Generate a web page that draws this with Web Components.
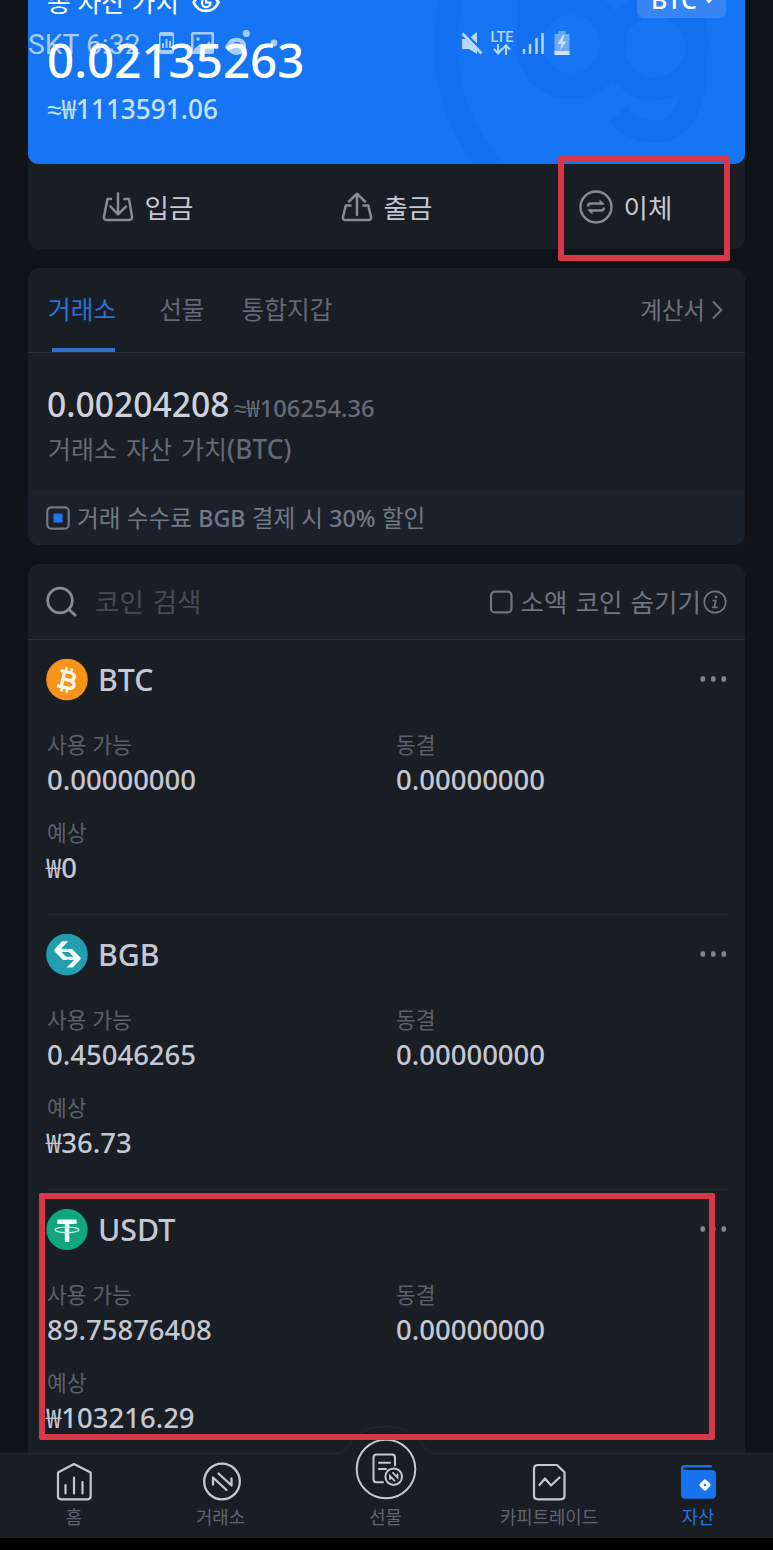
<!DOCTYPE html>
<html lang="ko">
<head>
<meta charset="utf-8">
<title>자산</title>
<style>
body {
    margin: 0;
    background: #000;
    font-family: "Noto Sans", "Noto Sans CJK KR", sans-serif;
}
</style>
</head>
<body>
<wallet-app></wallet-app>

<script>
/** Markup of every icon, with its box size. */
const icons = {
    eye: [28, 20, `<g fill="none" stroke="currentColor" stroke-width="2.8"><path d="M1.6 9.500C7-1.500 21-1.500 26.400 9.500 21 20.800 7 20.800 1.600 9.500Z"/><path d="M14 5.500V9.500H18.500A4.300 4.300 0 1 1 11 7" stroke-width="2.200"/></g>`],
    caret: [10, 6, `<path d="M0 0H10L5 5.500Z" fill="currentColor"/>`],
    deposit: [32, 30, `<g fill="none" stroke="currentColor" stroke-width="2.500" stroke-linecap="round" stroke-linejoin="round"><path d="M9 7H5.500L2 24.500Q1.600 28 4.500 28H27.500Q30.400 28 30 24.500L27 7H22.500M16 1.500V22M8.500 14.500 16 22.300 24 14.500"/></g>`],
    withdraw: [32, 30, `<g fill="none" stroke="currentColor" stroke-width="2.500" stroke-linecap="round" stroke-linejoin="round"><path d="M9.500 13.500H4.800L2 25Q1.600 28 4.500 28H27.500Q30.400 28 30 25L27.300 13.500H22.500M16 23V2M8 9.500 16 1.700 24 9.500"/></g>`],
    transfer: [34, 34, `<g fill="none" stroke="currentColor" stroke-width="2.400"><circle cx="17" cy="17" r="15.500"/><path d="M9 16.500Q9 13.500 12 13.500H24M25 17.500Q25 20.500 22 20.500H10"/></g><path d="M20.500 9.500 26 14.600H20.500ZM13.500 24.500 8 19.500H13.500Z" fill="currentColor"/>`],
    chevron: [12, 20, `<path d="M2 1.500 10.300 10 2 18.500" fill="none" stroke="currentColor" stroke-width="2"/>`],
    search: [32, 32, `<g fill="none" stroke="currentColor" stroke-width="2.800"><circle cx="14" cy="14.500" r="12.300"/><path d="M22.500 23 30 30"/></g>`],
    checked: [24, 24, `<rect x="1.300" y="1.300" width="21.400" height="21.400" rx="4" fill="none" stroke="currentColor" stroke-width="2.200"/><path d="M7.500 7.500H16.500V16.500H7.500Z" fill="#1b76ef"/>`],
    unchecked: [24, 24, `<rect x="2" y="1.600" width="20.500" height="20.800" rx="4" fill="none" stroke="currentColor" stroke-width="2.200"/>`],
    info: [24, 24, `<g fill="none" stroke="currentColor" stroke-width="1.700"><circle cx="12" cy="12" r="10.700"/><path d="M9.500 10.500H12.700L11.300 17.300M9 17.300H14.500"/></g><circle cx="13" cy="7" r="1.400" fill="currentColor"/>`],
    more: [28, 6, `<g fill="currentColor"><rect x="1.500" y=".3" width="4.600" height="5.400" rx="1.600"/><rect x="12" y=".3" width="4.600" height="5.400" rx="1.600"/><rect x="22.500" y=".3" width="4.600" height="5.400" rx="1.600"/></g>`],
    btc: [42, 42, `<circle cx="21" cy="20.500" r="20.800" fill="#f7931a"/><g transform="rotate(13 21 21)" fill="none" stroke="#fff6e8" stroke-width="3.300"><path d="M12.500 13.200H22.500Q27.500 13.200 27.500 17Q27.500 20.700 22.500 20.700H17M22.500 20.700Q29 20.700 29 24.700Q29 28.800 22.500 28.800H12.500M16.800 13V29"/><path d="M18 8.500V13M23.300 8.500V13M18 29V33.500M23.300 29V33.500" stroke-width="2.700"/></g>`],
    bgb: [42, 42, `<circle cx="21" cy="20.500" r="20.800" fill="#249eae"/><g fill="#f2ffff"><path id="half" d="M16.200 7.300H22.200L15 14.800H20L23.200 18.100H15.500L21.500 24.100V25.900H17L8.600 17.400Q7.800 16.300 8.600 15.300Z"/><use href="#half" transform="rotate(180 21.500 20.400)"/></g>`],
    usdt: [42, 42, `<circle cx="21" cy="20.500" r="20.600" fill="#12a67c"/><path d="M11.300 10.500H30.600V15H23.300V33H18.800V15H11.300Z" fill="#f0fff9"/><ellipse cx="21" cy="20.800" rx="12" ry="2.800" fill="none" stroke="#c6f1e2" stroke-width="1.200"/>`],
    home: [40, 42, `<g fill="none" stroke="currentColor" stroke-width="2.200" stroke-linecap="round" stroke-linejoin="round"><path d="M4 12.500 20 4 36.700 12.500V36Q36.700 39.300 33.500 39.300H7.200Q4 39.300 4 36Z"/><path d="M11.500 25V33.500M20 17.500V33.500M28.500 22V33.500"/></g>`],
    exchange: [40, 42, `<g fill="none" stroke="currentColor" stroke-width="2.300" stroke-linejoin="round" stroke-linecap="round"><circle cx="21" cy="21.500" r="17.800"/><path d="M17.500 13.500 30.500 25.500V18.500M25.500 30 12 17.500V24.500"/></g>`],
    futures: [62, 62, `<circle cx="31" cy="31" r="29.300" fill="none" stroke="currentColor" stroke-width="2"/><g fill="none" stroke="currentColor" stroke-width="2" stroke-linecap="round"><path d="M28 44.300H21.200Q18.500 44.300 18.500 41.300V19.500Q18.500 16.500 21.500 16.500H37Q40 16.500 40 19.500V27.500M24 24.700H35M24 31H31"/><circle cx="38.700" cy="38.700" r="8.300"/><path d="M38 34.800 42.500 39.500V36.500M39.500 42.600 35 38V41" stroke-width="1.800"/></g>`],
    copy: [40, 42, `<g fill="none" stroke="currentColor" stroke-width="2.200" stroke-linejoin="round" stroke-linecap="round"><path d="M9 5H28L35.500 12.300V35.500Q35.500 39.300 31.700 39.300H9Q5 39.300 5 35.500V9Q5 5 9 5Z"/><path d="M10.500 25 16 18.500 22 25.500 30.500 17.500"/></g>`],
    wallet: [40, 42, `<path d="M6 5H33Q34 5 34 6.200T33 7.400H6.500Q5.500 7.400 5.500 8.700T6.500 10H34Q38 10 38 14V34Q38 38.700 34 38.700H7Q3 38.700 3 34V8.500Q3 5 6 5Z" fill="#1672ee"/><path d="M27 21 31 25 27 29 23 25Z" fill="#1672ee" stroke="#fff" stroke-width="3.200" stroke-linejoin="round"/>`],
}

/** Draws an icon at its own size, in the colour of the text around it. */
customElements.define('app-icon',
class extends HTMLElement {
    constructor() {
        super()
        this.attachShadow({ mode: 'open' })
    }

    connectedCallback() {
        const [width, height, body] = icons[this.getAttribute('name')]
        this.shadowRoot.innerHTML = `
        <style>
        :host { display: block; flex: none; }
        svg { display: block; }
        </style>
        <svg width="${width}" height="${height}" viewBox="0 0 ${width} ${height}">${body}</svg>`
    }
})

/**
 * Defines an element whose shadow root is cloned from a template.
 * @param {string} name Tag name.
 * @param {string} html Styles and markup.
 */
function defineStatic(name, html) {
    const template = document.createElement('template')
    template.innerHTML = html
    customElements.define(name,
    class extends HTMLElement {
        constructor() {
            super()
            this.attachShadow({ mode: 'open' })
            .appendChild(template.content.cloneNode(true))
        }
    })
}

defineStatic('status-bar', `
<style>
:host {
    position: absolute;
    top: 30px;
    left: 0;
    width: 717px;
    height: 28px;
    color: #a9cdfb;
    font-family: Roboto, sans-serif;
}
.bar { display: flex; height: 28px; align-items: center; }
.carrier { font-size: 28.300px; line-height: 28px; width: 130px; margin-top: 2px; white-space: nowrap; }
.left { width: 303px; }
.lte { width: 24px; margin: -1px 0 0 7px; text-align: center; font-size: 14.500px; line-height: 12px; font-weight: 500; color: #b8d6fc; }
.lte svg { margin: 0 auto; }
svg { display: block; flex: none; }
</style>
<div class="bar">
    <span class="carrier">SKT 6:32</span>
    <svg class="left" height="28" viewBox="0 0 303 28">
        <g fill="currentColor">
            <path fill-rule="evenodd" d="M3 2H14Q16 2 16 4V22Q16 24 14 24H3Q1 24 1 22V4Q1 2 3 2ZM2.500 6V20H14.500V6Z"/>
            <path d="M4 13H6V18H4ZM7.500 9H9.500V18H7.500ZM11 11H13V18H11Z"/>
            <path fill-rule="evenodd" d="M35 2H54Q56 2 56 4V22Q56 24 54 24H35Q33 24 33 22V4Q33 2 35 2ZM35.500 4.500V21.500H53.500V4.500Z"/>
            <path d="M36 19 42 14 46 18 51 11 54 16V22H36Z"/><circle cx="40" cy="9" r="1.800"/>
            <path fill-rule="evenodd" d="M69 14A10 9 0 0 1 88 14Q89 24 79 25 73 25 70 20L67 16ZM75 15A4 3 0 0 0 83 15 4 3 0 0 0 75 15Z"/>
            <circle cx="88.300" cy="3.500" r="3.600"/><circle cx="116" cy="13" r="3.400"/>
        </g>
    </svg>
    <svg width="22" height="26" viewBox="0 0 22 26">
        <path d="M1 8H7L16 1V23L8 18H1Z" fill="#b8d6fc"/>
        <path d="M3 1 22 20.500" stroke="#1575f3" stroke-width="2.500"/>
        <path d="M1.500 2.500 20.500 22.500" stroke="#b8d6fc" stroke-width="2.700"/>
    </svg>
    <div class="lte">LTE
        <svg width="18" height="11" viewBox="0 0 18 11"><path d="M5 0V9M1 5 5 9.500 9 5M13 11V2M9 5.500 13 1.300 17 5.500" fill="none" stroke="currentColor" stroke-width="2"/></svg>
    </div>
    <svg width="24" height="24" viewBox="0 0 24 24" style="margin: -2px 0 0 8px"><path d="M2 18V23M8 13V23M14.500 7V23M20.500 2V23" stroke="#b8d6fc" stroke-width="2.500"/></svg>
    <svg width="16" height="26" viewBox="0 0 16 26" style="margin: -2px 0 0 8px">
        <path d="M4.500 1H11.500V4H15.500V25H.5V4H4.500Z" fill="#6fa9f5"/><path d="M.5 21H15.500V25H.5Z" fill="#cce1fd"/>
        <path d="M9 5 3.500 14H7.500L6 20 12.500 11.500H8.500L10.500 5Z" fill="#cce1fd"/>
    </svg>
</div>
`)

defineStatic('asset-summary', `
<style>
:host {
    display: block;
    position: relative;
    height: 164px;
    border-radius: 0 0 10px 10px;
    background: #1575f3;
    color: #fff;
    overflow: hidden;
}
.mark { position: absolute; top: 0; right: 0; }
.content { position: relative; padding: 0 19px; font-weight: 500; }
.top { display: flex; justify-content: space-between; height: 18px; }
.title { display: flex; margin-top: -15px; font-size: 25.800px; line-height: 34px; font-weight: 400; height: 34px; }
.title app-icon { margin: 8px 0 0 13px; }
.unit {
    display: flex;
    box-sizing: border-box;
    width: 89px;
    height: 34px;
    margin-top: -16px;
    padding: 0 12px 0 14px;
    justify-content: space-between;
    border-radius: 6px;
    background: #3685f2;
    font-size: 25px;
    line-height: 30px;
}
.unit app-icon { margin-top: 14px; }
.total { margin-top: 14px; font-size: 47.500px; line-height: 56px; }
.fiat { margin-top: 7px; font-size: 26.200px; line-height: 28px; color: #c8e2ff; white-space: nowrap; }
.won { font-family: "Noto Sans CJK KR", sans-serif; font-weight: 400; line-height: 0; }
.approx { font-family: "Liberation Sans", sans-serif; line-height: 0; }
</style>
<svg class="mark" width="317" height="164" viewBox="428 0 317 164">
    <g fill="none" stroke="#116ff0">
        <circle cx="635" cy="45" r="189" stroke-width="24" stroke="#1371f1"/>
        <circle cx="571" cy="44" r="42" stroke-width="26"/>
        <circle cx="655" cy="47" r="42" stroke-width="23"/>
        <path d="M530-20V44" stroke-width="26"/>
        <path d="M696-20V75Q690 130 655 132 632 131 618 114" stroke-width="22"/>
    </g>
</svg>
<status-bar></status-bar>
<div class="content">
    <div class="top">
        <div class="title">총 자산 가치<app-icon name="eye"></app-icon></div>
        <div class="unit">BTC<app-icon name="caret"></app-icon></div>
    </div>
    <div class="total">0.02135263</div>
    <div class="fiat"><span class="approx">≈</span><span class="won">₩</span>1113591.06</div>
</div>
`)

defineStatic('action-button', `
<style>
:host {
    display: flex;
    flex: 1;
    align-items: center;
    justify-content: center;
    gap: 11px;
    color: #878b97;
}
span { margin-top: 2px; color: #c5c8d3; font-size: 26.500px; line-height: 36px; }
</style>
<slot name="icon"></slot><span><slot></slot></span>
`)

defineStatic('wallet-panel', `
<style>
:host {
    display: block;
    height: 277px;
    border-radius: 11px;
    background: #191d24;
    color: #636976;
    overflow: hidden;
}
.tabs {
    display: flex;
    box-sizing: border-box;
    height: 85px;
    padding: 0 22px 0 20px;
    border-bottom: 1px solid #2c3038;
    font-size: 24.700px;
    line-height: 84px;
}
.tab { margin-right: 43px; }
.tab + .tab { margin-right: 37px; }
.active { color: #2874d8; }
.active i { display: block; width: 63px; height: 4px; margin: -4px 0 0 4px; background: #2f72cd; }
.bill { display: flex; align-items: center; gap: 6px; margin-left: auto; font-size: 23.500px; color: #6c727e; }
.worth { height: 137px; padding: 33px 19px 0; box-sizing: border-box; }
.amount { height: 36px; font-size: 33.700px; line-height: 36px; color: #cdd1dc; font-weight: 500; white-space: nowrap; }
small { margin-left: 4px; font-size: 23.700px; line-height: 0; color: #656c79; }
.won { font-family: "Noto Sans CJK KR", sans-serif; font-weight: 400; line-height: 0; }
.approx { font-family: "Liberation Sans", sans-serif; line-height: 0; }
.caption { margin: 10px 0 0 1px; font-size: 25px; line-height: 34px; word-spacing: 2.500px; }
.caption b { font-weight: 500; font-size: 26.300px; line-height: 0; }
.fee { display: flex; align-items: center; gap: 7px; height: 55px; padding: 0 18px; background: #1b212b; color: #717985; font-size: 23.700px; }
.fee span { margin-top: -1px; }
.fee b { font-weight: 500; font-size: 23.200px; line-height: 0; }
</style>
<div class="tabs">
    <div class="tab active">거래소<i></i></div>
    <div class="tab">선물</div>
    <div class="tab">통합지갑</div>
    <div class="bill">계산서<app-icon name="chevron"></app-icon></div>
</div>
<div class="worth">
    <div class="amount">0.00204208<small><span class="approx">≈</span><span class="won">₩</span>106254.36</small></div>
    <div class="caption">거래소 자산 가치<b>(BTC)</b></div>
</div>
<div class="fee"><app-icon name="checked"></app-icon><span>거래 수수료 <b>BGB</b> 결제 시 <b>30%</b> 할인</span></div>
`)

defineStatic('coin-search', `
<style>
:host {
    display: flex;
    box-sizing: border-box;
    height: 76px;
    padding: 0 18px;
    align-items: center;
    border-bottom: 1px solid #2c3038;
    color: #858b97;
}
.hint { margin: -2px 0 0 17px; font-size: 26.500px; word-spacing: 2px; color: #474b55; }
.hide { display: flex; align-items: center; margin-left: auto; font-size: 25.500px; word-spacing: 1.500px; color: #6f7580; }
.hide span { margin: -2px 2px 0 8px; }
</style>
<app-icon name="search"></app-icon>
<span class="hint">코인 검색</span>
<div class="hide"><app-icon name="unchecked"></app-icon><span>소액 코인 숨기기</span><app-icon name="info"></app-icon></div>
`)

/** One coin of the list, filled from its attributes. */
customElements.define('coin-row',
class extends HTMLElement {
    constructor() {
        super()
        this.attachShadow({ mode: 'open' })
    }

    connectedCallback() {
        const coin = this.getAttribute('coin')
        this.shadowRoot.innerHTML = `
        <style>
        :host {
            display: block;
            box-sizing: border-box;
            height: 275px;
            margin: 0 18px;
            padding-top: 19px;
            border-bottom: 1px solid #24282f;
            color: #c5c8d3;
        }
        header { display: flex; height: 42px; align-items: center; }
        .name { flex: 1; margin-left: 10px; font-size: 30.300px; line-height: 42px; font-weight: 500; }
        app-icon[name=more] { margin-top: -2px; color: #80858f; }
        .values { display: grid; grid-template-columns: 349px 1fr; margin: 32px 0 0 1px; row-gap: 26px; }
        .label { height: 24px; font-size: 21.500px; line-height: 24px; color: #5a606c; }
        .value { margin-top: 8px; font-size: 27.500px; line-height: 29px; height: 30px; font-weight: 500; }
        .won { margin-left: -1px; font-family: "Noto Sans CJK KR", sans-serif; font-weight: 400; line-height: 0; }
        </style>
        <header>
            <app-icon name="${coin.toLowerCase()}"></app-icon>
            <span class="name">${coin}</span>
            <app-icon name="more"></app-icon>
        </header>
        <div class="values">
            <div><div class="label">사용 가능</div><div class="value">${this.getAttribute('available')}</div></div>
            <div><div class="label">동결</div><div class="value">0.00000000</div></div>
            <div><div class="label">예상</div><div class="value"><span class="won">₩</span>${this.getAttribute('estimate')}</div></div>
        </div>`
    }
})

defineStatic('nav-item', `
<style>
:host { display: flex; flex-direction: column; align-items: center; justify-content: flex-end; color: #c5c8d2; }
span { margin-top: 2px; height: 34px; font-size: 17.800px; line-height: 27px; color: #5f6572; white-space: nowrap; }
:host([active]) span { color: #2574d9; }
::slotted([name=futures]) { margin: -20px 0 2px; }
</style>
<slot name="icon"></slot><span><slot></slot></span>
`)

defineStatic('bottom-nav', `
<style>
:host { display: block; position: relative; height: 85px; background: #191d24; }
.hump { position: absolute; top: -28px; left: 0; }
nav { position: relative; display: grid; grid-template-columns: 148px 145px 185px 142px 156px; grid-template-rows: 85px; width: 773px; }
</style>
<svg class="hump" width="773" height="32" viewBox="0 0 773 32">
    <path d="M0 28.500H338C350 28.500 350 1.500 386 1.500S422 28.500 434 28.500H773V32H0Z" fill="#191d24"/>
    <path d="M0 28.500H338C350 28.500 350 1.500 386 1.500S422 28.500 434 28.500H773" fill="none" stroke="#22282e" stroke-width="1.300"/>
</svg>
<nav>
    <nav-item><app-icon slot="icon" name="home"></app-icon>홈</nav-item>
    <nav-item><app-icon slot="icon" name="exchange"></app-icon>거래소</nav-item>
    <nav-item><app-icon slot="icon" name="futures"></app-icon>선물</nav-item>
    <nav-item><app-icon slot="icon" name="copy"></app-icon>카피트레이드</nav-item>
    <nav-item active><app-icon slot="icon" name="wallet"></app-icon>자산</nav-item>
</nav>
`)

/** Red frame drawn over the page. */
defineStatic('marker-frame', `
<style>
:host { position: absolute; box-sizing: border-box; border: 6px solid #d93747; border-radius: 2px; }
</style>
`)

defineStatic('wallet-app', `
<style>
:host { display: block; position: relative; width: 773px; height: 1550px; overflow: hidden; background: #000; }
main { display: flex; flex-direction: column; gap: 19px; box-sizing: border-box; height: 1453px; padding: 0 28px; background: #101318; overflow: hidden; }
.top, .coins { background: #191d24; }
.top { border-radius: 0 0 11px 11px; }
.actions { display: flex; height: 85px; }
wallet-panel, .top { flex: none; }
.coins { flex: none; border-radius: 11px 11px 0 0; }
.transfer { left: 558px; top: 156px; width: 172px; height: 105px; }
.usdt { left: 39px; top: 1193px; width: 676px; height: 247px; }
</style>
<main>
    <div class="top">
        <asset-summary></asset-summary>
        <div class="actions">
            <action-button><app-icon slot="icon" name="deposit"></app-icon>입금</action-button>
            <action-button><app-icon slot="icon" name="withdraw"></app-icon>출금</action-button>
            <action-button><app-icon slot="icon" name="transfer"></app-icon>이체</action-button>
        </div>
    </div>
    <wallet-panel></wallet-panel>
    <div class="coins">
        <coin-search></coin-search>
        <coin-row coin="BTC" available="0.00000000" estimate="0"></coin-row>
        <coin-row coin="BGB" available="0.45046265" estimate="36.73"></coin-row>
        <coin-row coin="USDT" available="89.75876408" estimate="103216.29"></coin-row>
    </div>
</main>
<bottom-nav></bottom-nav>
<marker-frame class="transfer"></marker-frame>
<marker-frame class="usdt"></marker-frame>
`)
</script>
</body>
</html>
